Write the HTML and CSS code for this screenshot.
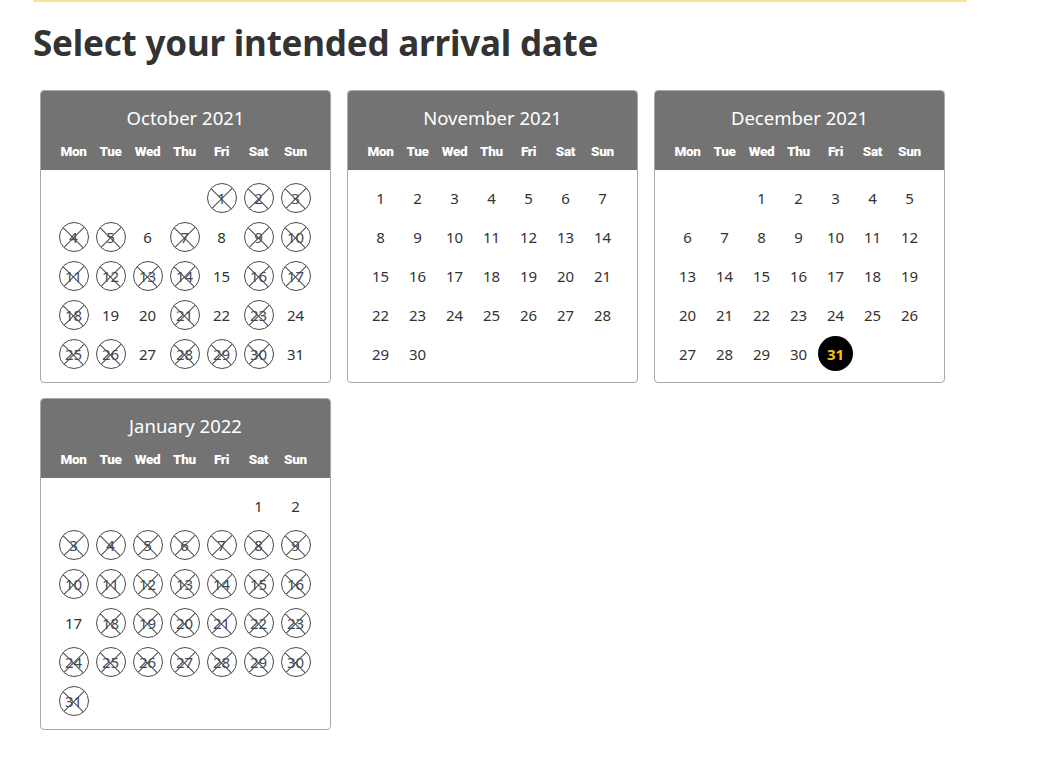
FILE: index.html
```html
<!DOCTYPE html>
<html lang="en">
<head>
    <meta charset="UTF-8">
    <meta name="viewport" content="width=device-width, initial-scale=1.0">
    <title>Select your intended arrival date</title>
    <link rel="stylesheet" href="styles.css">
</head>
<body>
    <div class="page">
        <h1>Select your intended arrival date</h1>
        <div class="calendars" id="calendars"></div>
    </div>

    <script>
        const months = [
            { name: 'October 2021', offset: 4, days: 31, crossed: [1,2,3,4,5,7,9,10,11,12,13,14,16,17,18,21,23,25,26,28,29,30] },
            { name: 'November 2021', offset: 0, days: 30, crossed: [] },
            { name: 'December 2021', offset: 2, days: 31, crossed: [], selected: 31 },
            { name: 'January 2022', offset: 5, days: 31, crossed: [3,4,5,6,7,8,9,10,11,12,13,14,15,16,18,19,20,21,22,23,24,25,26,27,28,29,30,31] }
        ];
        const weekdays = ['Mon', 'Tue', 'Wed', 'Thu', 'Fri', 'Sat', 'Sun'];

        const wrap = document.getElementById('calendars');
        months.forEach(month => {
            const cal = document.createElement('div');
            cal.className = 'calendar';

            let html = '<div class="cal-head"><div class="cal-title">' + month.name + '</div><div class="cal-week">';
            weekdays.forEach(d => { html += '<span>' + d + '</span>'; });
            html += '</div></div><div class="cal-days">';

            for (let i = 0; i < month.offset; i++) {
                html += '<span class="day empty"></span>';
            }
            for (let d = 1; d <= month.days; d++) {
                let cls = 'day';
                if (month.crossed.includes(d)) cls += ' crossed';
                if (month.selected === d) cls += ' selected';
                html += '<span class="' + cls + '"><i>' + d + '</i></span>';
            }
            html += '</div>';

            cal.innerHTML = html;
            wrap.appendChild(cal);
        });
    </script>
</body>
</html>
```

FILE: styles.css
```css
:root {
    --head-grey: #737373;
    --text-dark: #333333;
    --line-grey: #4a4a4a;
    --accent-yellow: #ffc20e;
}

* {
    margin: 0;
    padding: 0;
    box-sizing: border-box;
}

body {
    background: #ffffff;
    font-family: 'Noto Sans', 'Open Sans', sans-serif;
    color: var(--text-dark);
}

.page {
    width: 934px;
    margin-left: 33px;
    border-top: 2px solid #fde58f;
}

h1 {
    font-size: 35px;
    font-weight: 700;
    line-height: 40px;
    margin-top: 21px;
    color: #333;
    letter-spacing: -0.2px;
}

.calendars {
    display: flex;
    flex-wrap: wrap;
    gap: 15px 16px;
    margin-top: 27px;
    padding-left: 7px;
}

.calendar {
    width: 291px;
    border: 1px solid #a9a9a9;
    border-radius: 4px;
    overflow: hidden;
}

.cal-head {
    background-color: var(--head-grey);
    color: #fff;
    padding: 8px 14px 5px;
}

.cal-title {
    text-align: center;
    font-size: 18.5px;
    line-height: 38px;
}

.cal-week {
    display: grid;
    grid-template-columns: repeat(7, 37px);
    line-height: 28px;
    font-family: 'Roboto', sans-serif;
    font-weight: 900;
    font-size: 13.5px;
    text-align: center;
    letter-spacing: -0.3px;
}

.cal-days {
    display: grid;
    grid-template-columns: repeat(7, 37px);
    grid-auto-rows: 39px;
    padding: 8px 14px 9px;
}

.day {
    display: flex;
    align-items: center;
    justify-content: center;
    font-size: 15px;
}

.day i {
    font-style: normal;
    position: relative;
    display: flex;
    align-items: center;
    justify-content: center;
    width: 30px;
    height: 30px;
    border-radius: 50%;
}

.crossed i {
    border: 1.3px solid var(--line-grey);
    overflow: hidden;
    color: #3e4a60;
}

.crossed i::before,
.crossed i::after {
    content: '';
    position: absolute;
    left: calc(50% - 0.6px);
    top: -2px;
    width: 1.2px;
    height: 34px;
    background: var(--line-grey);
    transform: rotate(45deg);
}

.crossed i::after {
    transform: rotate(-45deg);
}

.selected i {
    width: 35px;
    height: 35px;
    background: #000;
    color: var(--accent-yellow);
    font-weight: 700;
}
```
